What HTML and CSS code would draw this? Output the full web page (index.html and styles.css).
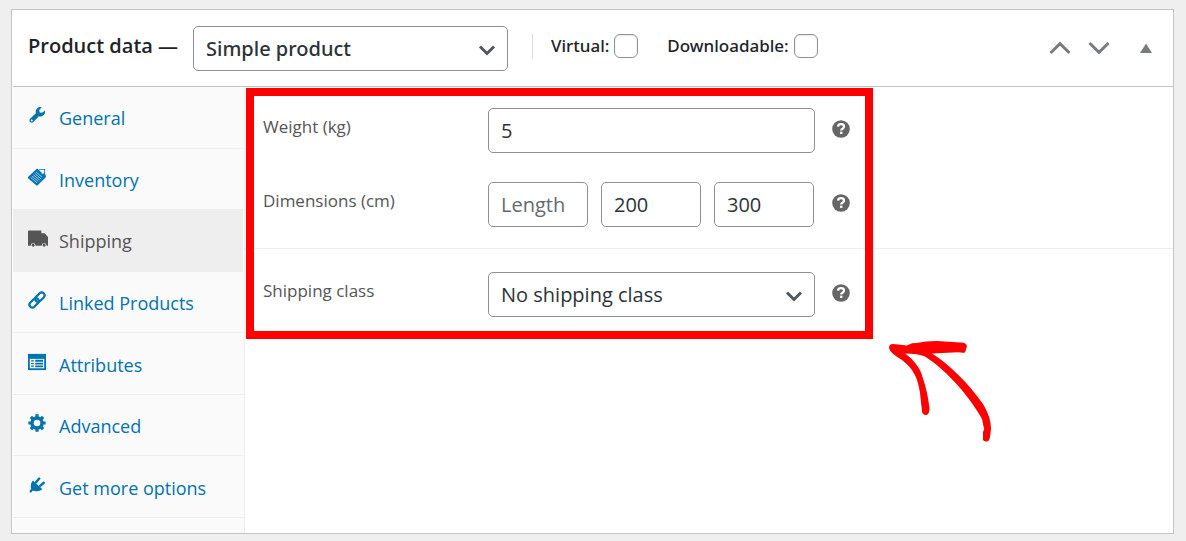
FILE: index.html
```html
<!DOCTYPE html>
<html lang="en">
<head>
<meta charset="utf-8">
<title>Product data</title>
<link rel="stylesheet" href="styles.css">
</head>
<body>
<main class="postbox">
  <header class="head">
    <h2 class="title"><label for="product-type">Product data —</label></h2>
    <div class="select-wrap type-select">
      <select id="product-type" class="control"><option>Simple product</option></select>
      <svg class="chevron" viewBox="0 0 18 12" aria-hidden="true"><path d="M2 2.500 9 9.500 16 2.500"/></svg>
    </div>
    <div class="flags">
      <label class="flag">Virtual:<input type="checkbox" class="check"></label>
      <label class="flag">Downloadable:<input type="checkbox" class="check"></label>
    </div>
    <div class="handles">
      <button class="handle" type="button" aria-label="Move up"><svg viewBox="0 0 22 14"><path class="line" d="M1.500 12 11 2.700 20.500 12"/></svg></button>
      <button class="handle" type="button" aria-label="Move down"><svg viewBox="0 0 22 14"><path class="line" d="M1.500 2 11 11.300 20.500 2"/></svg></button>
      <button class="handle toggle" type="button" aria-label="Toggle panel"><svg viewBox="0 0 22 14"><path d="M11 2.500 17 12H5z"/></svg></button>
    </div>
  </header>
  <div class="body">
    <nav class="tabs">
      <a class="tab" href="#general">
        <svg class="icon" viewBox="0 0 20 20"><path d="M17.200 10.200c-1.500 1.500-3.500 1.800-5.200 1.300L6 17.800c-1 1-2.700 1-3.700 0s-1-2.600 0-3.600l6.500-6.100C8.200 6.400 8.700 4.200 10.100 2.800 11.500 1.400 13.400.9 15.200 1.300l-2.700 3.200.4 2.600 2.700.5 3.300-2.700c.3 1.900-.2 3.800-1.700 5.300zM4.900 17c.5-.5.5-1.200 0-1.600s-1.100-.4-1.500 0-.4 1.200 0 1.600 1.100.4 1.500 0z"/></svg>
        General</a>
      <a class="tab" href="#inventory">
        <svg class="icon" viewBox="0 0 20 20"><path d="M10 .5 19.500 7.500 20 10 10.500 19.500 9.500 19.500 0 11.500V10z"/><path class="cut" d="m3 10.500 7 6M4.500 9l7 6M6 7.500l7 6M7.500 6l7 6M9 4.500l6.500 5.500"/><path class="flap" d="M12.500 2.500h4.500v4.500z"/><path d="M12 2 13 1h6v6l-1 1V2z"/><path class="cut" d="M15.500 5.500v1.500"/></svg>
        Inventory</a>
      <a class="tab active" href="#shipping" aria-current="page">
        <svg class="icon truck" viewBox="0 0 21 17"><path d="M1 0h13v3h3.500L21 7v9h-1.500a2.600 2.600 0 0 0-5.200 0H8a2.600 2.600 0 0 0-5.200 0H0V1q0-1 1-1z"/><circle cx="5.400" cy="15.600" r="1.500"/><circle cx="16.900" cy="15.600" r="1.500"/></svg>
        Shipping</a>
      <a class="tab" href="#linked">
        <svg class="icon" viewBox="0 0 20 20"><g class="link" transform="rotate(-45 10 10)"><rect x="-.5" y="6.800" width="12" height="6.400" rx="3.200"/><rect x="8.500" y="6.800" width="12" height="6.400" rx="3.200"/></g></svg>
        Linked Products</a>
      <a class="tab" href="#attributes">
        <svg class="icon" viewBox="0 0 20 20"><path d="M0 1h20v18H0z"/><path class="hole" d="M2 6.500h16v10.500H2z"/><path d="M3.500 8h3v1.500h-3zM8 7.600h8.700v2.200H8zM3.500 11h3v1.500h-3zM8 10.700h8.700v2.200H8zM3.500 14h3v1.300h-3zM8 13.800h8.700v2H8z"/></svg>
        Attributes</a>
      <a class="tab" href="#advanced">
        <svg class="icon" viewBox="0 0 20 20"><circle class="ring" cx="10" cy="10" r="5.600"/><path class="teeth" d="M10 .4v3M10 16.600v3M.4 10h3M16.600 10h3M3.200 3.200l2.200 2.200M14.600 14.600l2.200 2.200M3.200 16.800l2.200-2.200M14.600 5.400l2.200-2.200"/></svg>
        Advanced</a>
      <a class="tab" href="#more">
        <svg class="icon" viewBox="0 0 20 20"><path d="M5.500 5 16 14.800Q12 17.800 7.500 16.600L5 16.500 3.500 18.400H1.800V16.500L3.600 14.200Q2 9 5.500 5z"/><path class="prong" d="M9 6.800 12.500 2.800M13.500 11 17.500 7.500"/></svg>
        Get more options</a>
    </nav>
    <form class="panel">
      <section class="group">
        <div class="row">
          <label class="label" for="weight">Weight (kg)</label>
          <input id="weight" class="control" type="text" value="5">
          <svg class="help" viewBox="0 0 18 18" role="img" aria-label="Help"><circle cx="9" cy="9" r="8.800"/><path d="M6 6.600Q6.300 4.200 9 4.200q3 0 3 2.300 0 1.300-1.500 2.200Q9.200 9.400 9.200 10.500"/><path d="M8.100 12.800h2.300"/></svg>
        </div>
        <div class="row">
          <label class="label" for="length">Dimensions (cm)</label>
          <div class="triple">
            <input id="length" class="control" type="text" placeholder="Length">
            <input class="control" type="text" aria-label="Width" value="200">
            <input class="control" type="text" aria-label="Height" value="300">
          </div>
          <svg class="help" viewBox="0 0 18 18" role="img" aria-label="Help"><circle cx="9" cy="9" r="8.800"/><path d="M6 6.600Q6.300 4.200 9 4.200q3 0 3 2.300 0 1.300-1.500 2.200Q9.200 9.400 9.200 10.500"/><path d="M8.100 12.800h2.300"/></svg>
        </div>
      </section>
      <section class="group">
        <div class="row">
          <label class="label" for="ship-class">Shipping class</label>
          <div class="select-wrap">
            <select id="ship-class" class="control"><option>No shipping class</option></select>
            <svg class="chevron" viewBox="0 0 18 12" aria-hidden="true"><path d="M2 2.500 9 9.500 16 2.500"/></svg>
          </div>
          <svg class="help" viewBox="0 0 18 18" role="img" aria-label="Help"><circle cx="9" cy="9" r="8.800"/><path d="M6 6.600Q6.300 4.200 9 4.200q3 0 3 2.300 0 1.300-1.500 2.200Q9.200 9.400 9.200 10.500"/><path d="M8.100 12.800h2.300"/></svg>
        </div>
      </section>
      <div class="highlight"></div>
      <svg class="arrow" viewBox="0 0 104 104" aria-hidden="true"><path d="M1 7Q1 3 5 3L19 4.500 24 2.300 29 2Q37 0 49 0L72 1.500Q78 1 79 5L77 11.500Q75 12 70 11.300L44 12.500C62 24 80 42 95 63Q103 76 103 88L102 96Q101 101 98 100.500 94 100 95 96L95 91Q97 87 95.500 85.500L94 78C84 59 60 30 37 15.500Q30 12.500 17 12.500C25 18 33 28 34.500 36Q40 52 41.500 68 41 74 38 74 34 74 34 70L32 52C30 38 26 28 14 19Q2 12 1 7z"/></svg>
    </form>
  </div>
</main>
</body>
</html>
```

FILE: styles.css
```css
* { box-sizing: border-box; }

body {
  margin: 0;
  padding: 9px 12px 7px 11px;
  background: #efefef;
  color: #1d2327;
  font-family: "Segoe UI", "Open Sans", sans-serif;
}

.postbox {
  display: flex;
  flex-direction: column;
  min-height: calc(100vh - 16px);
  padding-left: 1px;
  border: 1px solid #c3c4c7;
  background: #fff;
}

.head {
  display: flex;
  align-items: center;
  padding: 16px 15px 15px;
  border-bottom: 1px solid #c3c4c7;
}

.title {
  width: 165px;
  margin: 0;
  padding-bottom: 6px;
  font-size: 20px;
  line-height: 26px;
  font-weight: 600;
  white-space: nowrap;
}

.select-wrap { position: relative; }
.type-select { width: 315px; }
.type-select .control {
  font-family: "Segoe UI", "Noto Sans", sans-serif;
  font-weight: 500;
}

.control {
  display: block;
  width: 100%;
  min-width: 0;
  height: 45px;
  margin: 0;
  padding: 1px 12px;
  border: 1px solid #8c8f94;
  border-radius: 5px;
  background: #fff;
  color: #2c3338;
  font-family: inherit;
  font-size: 20px;
  appearance: none;
}
.control::placeholder { color: #646970; opacity: 1; }

.chevron {
  position: absolute;
  right: 12px;
  top: 18px;
  width: 18px;
  height: 12px;
  fill: none;
  stroke: #50575e;
  stroke-width: 3;
  pointer-events: none;
}

.flags {
  display: flex;
  gap: 29px;
  margin: 0 0 6px 24px;
  padding-left: 18px;
  border-left: 1px solid #dcdcde;
}
.flag {
  display: flex;
  align-items: center;
  gap: 5px;
  height: 24px;
  font-family: "Segoe UI", "Noto Sans", sans-serif;
  font-size: 17px;
  font-weight: 500;
}
.check {
  width: 24px;
  height: 24px;
  margin: 0;
  border: 1px solid #8c8f94;
  border-radius: 6px;
  background: #fff;
  box-shadow: inset 0 1px 2px rgba(0, 0, 0, .1);
  appearance: none;
}

.handles {
  display: flex;
  gap: 17px;
  margin-left: auto;
  padding: 0 1px 2px 0;
}
.handle {
  display: flex;
  padding: 0;
  border: 0;
  background: none;
  fill: #787c82;
}
.handle svg { width: 22px; height: 14px; }
.handle .line { fill: none; stroke: #787c82; stroke-width: 3; }
.toggle { margin-left: 8px; }

.body { display: flex; flex: 1; }

.tabs {
  display: grid;
  grid-template-rows: repeat(7, 1fr);
  flex: none;
  width: 232px;
  padding-bottom: 15px;
  border-right: 1px solid #eee;
  background: #fafafa;
}
.tab {
  display: flex;
  align-items: center;
  gap: 13px;
  margin-right: 1px;
  padding: 2px 0 0 15px;
  border-bottom: 1px solid #eee;
  color: #0073b1;
  font-size: 18px;
  line-height: 26px;
  text-decoration: none;
}
.active { background: #eee; color: #555; }

.icon {
  width: 18px;
  height: 18px;
  margin-bottom: 6px;
  overflow: visible;
  fill: currentColor;
}
.icon.truck { width: 20px; height: 17px; margin-right: -2px; }
.cut { fill: none; stroke: #fafafa; stroke-width: .7; }
.flap { fill: #fafafa; }
.hole { fill: #fafafa; }
.link { fill: none; stroke: currentColor; stroke-width: 2.4; }
.ring { fill: none; stroke: currentColor; stroke-width: 3.8; }
.teeth { stroke: currentColor; stroke-width: 3.6; }
.prong { fill: none; stroke: currentColor; stroke-width: 2.6; stroke-linecap: round; }

.panel { position: relative; flex: 1; min-width: 0; }
.group {
  display: grid;
  gap: 29px;
  padding: 21px 18px;
}
.group + .group { padding-top: 23px; border-top: 1px solid #eee; }
.row {
  display: grid;
  grid-template-columns: 225px 327px 18px;
  align-items: start;
}
.row .help { margin: 12px 0 0 17px; }
.label {
  padding-top: 7px;
  color: #555;
  font-size: 17px;
  line-height: 24px;
}
.triple {
  display: grid;
  grid-template-columns: repeat(3, 100px);
  gap: 13px;
}
.help { width: 18px; height: 18px; fill: #666; }
.help path { fill: none; stroke: #fff; stroke-width: 2.3; }

.highlight {
  position: absolute;
  left: 1px;
  top: 1px;
  width: 627px;
  height: 251px;
  border: 8px solid #f00;
  pointer-events: none;
}
.arrow {
  position: absolute;
  left: 643px;
  top: 254px;
  width: 104px;
  height: 104px;
  fill: #f00;
  pointer-events: none;
}
```
